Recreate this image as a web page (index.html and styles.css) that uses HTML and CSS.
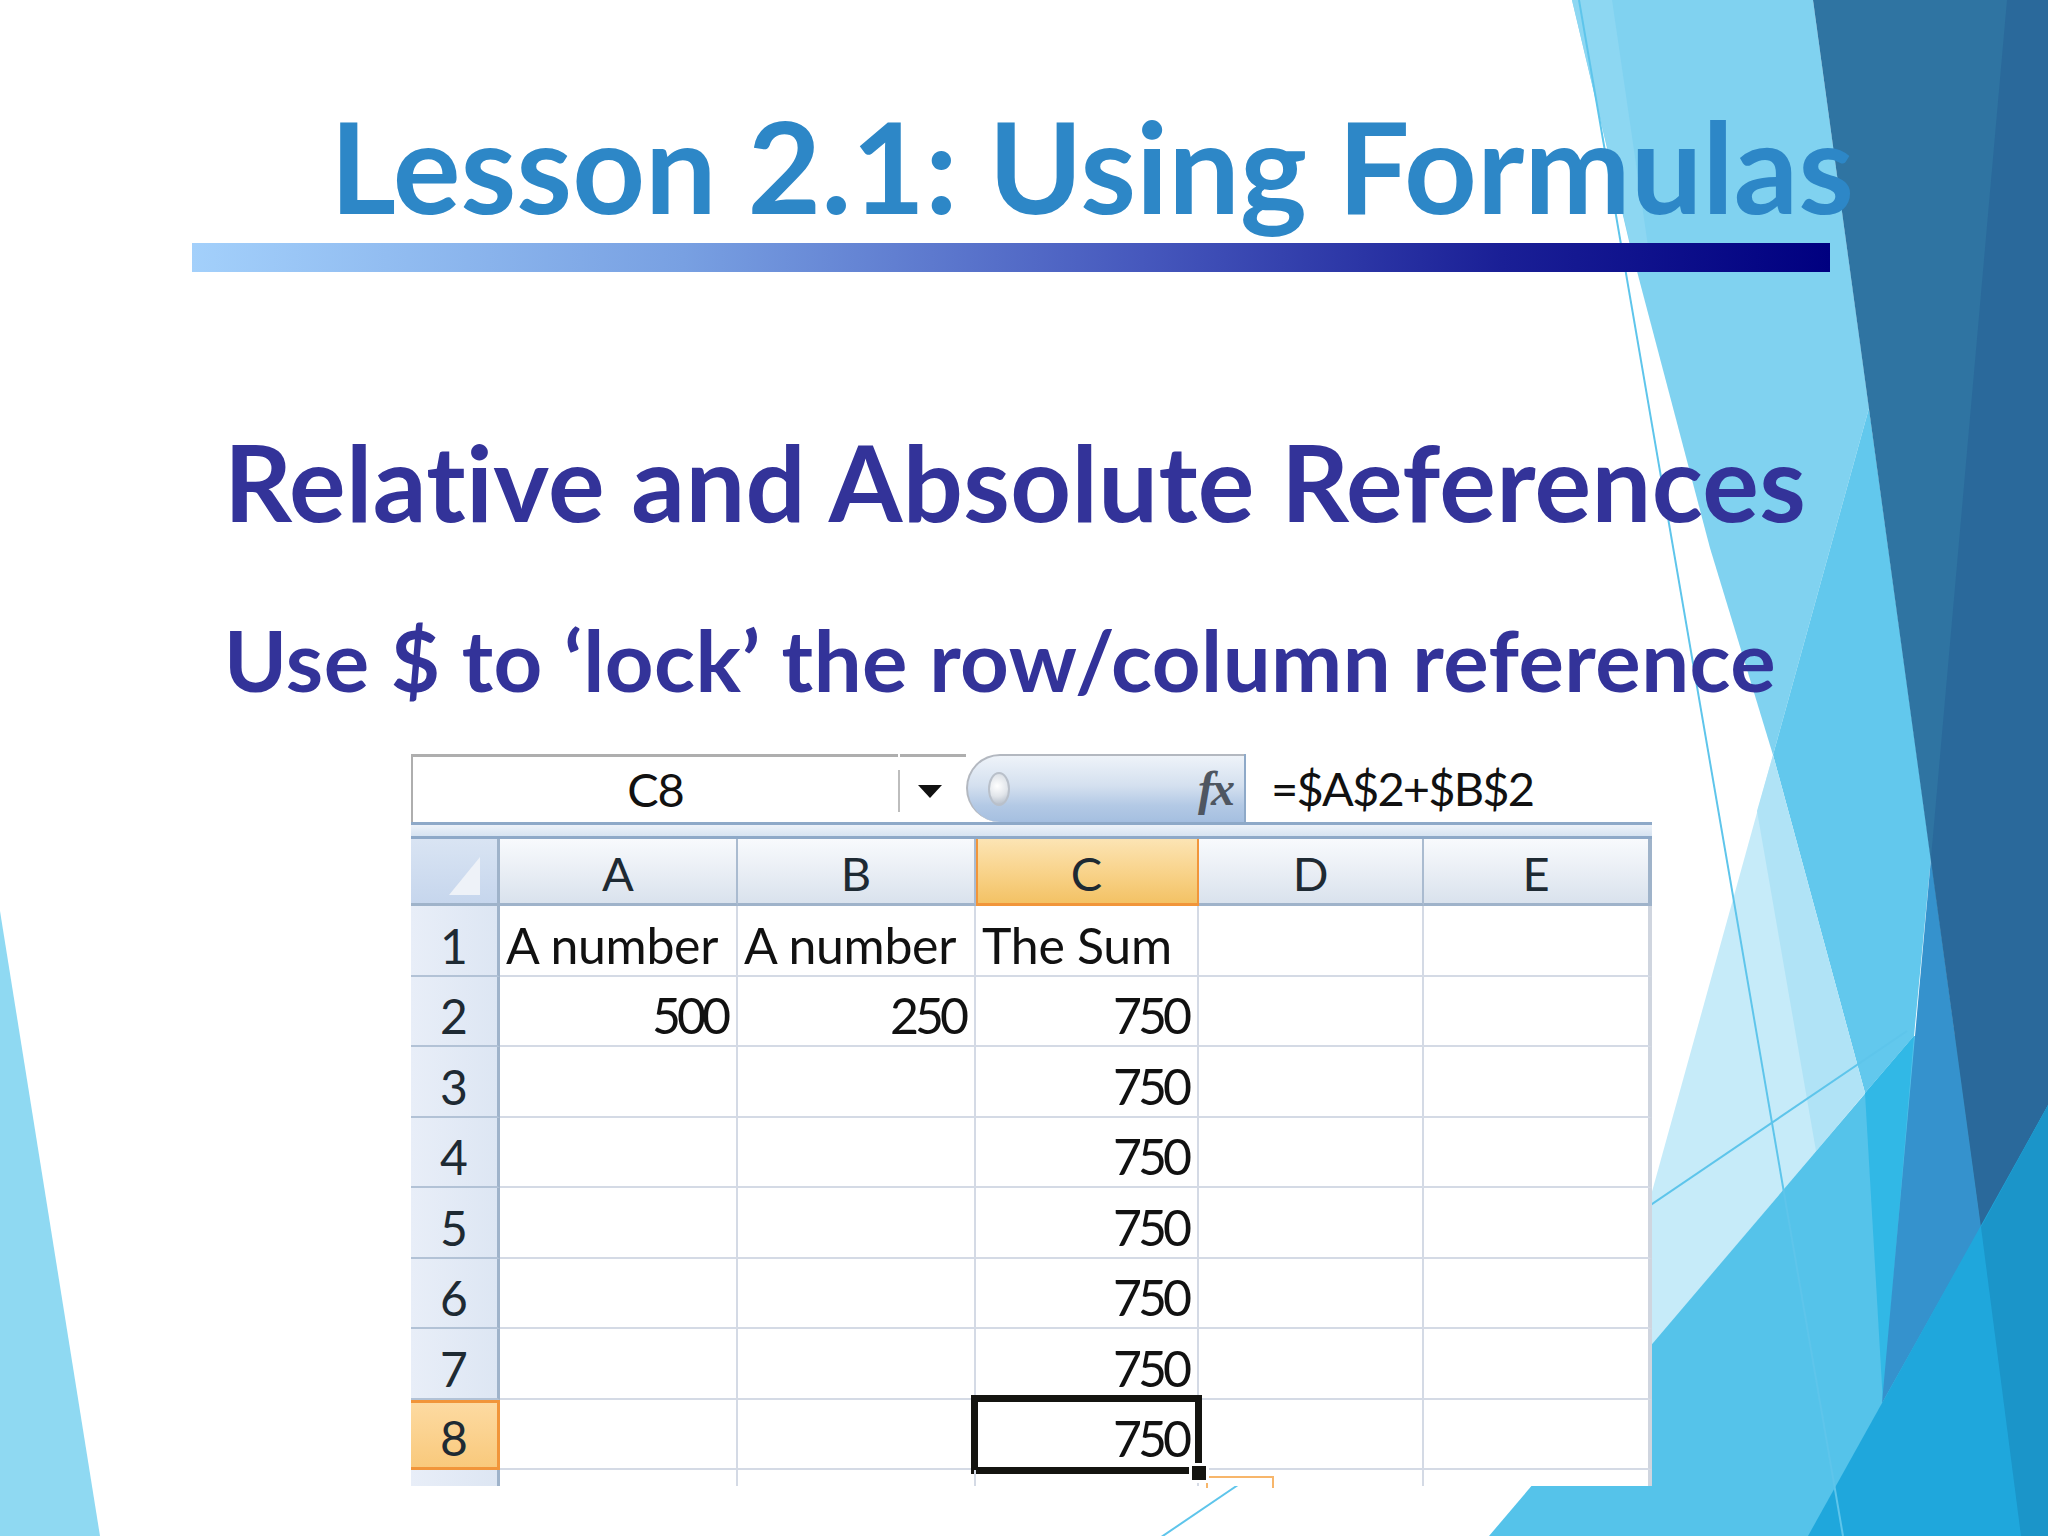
FILE: index.html
```html
<!DOCTYPE html>
<html>
<head>
<meta charset="utf-8">
<title>Lesson 2.1: Using Formulas</title>
<link rel="stylesheet" href="styles.css">
</head>
<body>
<div class="slide">
  <svg class="bg" viewBox="0 0 2048 1536" width="2048" height="1536" aria-hidden="true">
    <polygon points="0,911 100,1536 0,1536" fill="#8fd9f2"/>
    <polygon points="1572,0 1813,0 1869,408 1773,755 1710,548 1629,241" fill="#80d2f0"/>
    <polygon points="1572,0 1612,0 1650,260 1633,255" fill="#8dd7f2"/>
    <polygon points="1869,408 1931,858 1914,1036 1865,1093 1773,755" fill="#62c8ed"/>
    <polygon points="1773,755 1865,1093 1640,1360 1640,1235" fill="#c6ebf9"/>
    <polygon points="1757,811 1773,755 1865,1093 1816,1151" fill="#b0e3f6"/>
    <polygon points="1489,1536 1914,1036 2048,1036 2048,1536" fill="#55c3ea"/>
    <polygon points="1865,1093 1914,1036 1883,1403" fill="#31b8e6"/>
    <polygon points="1931,858 1981,1227 1882,1403" fill="#3592cd"/>
    <polygon points="1813,0 2048,0 2048,1105 1981,1227" fill="#2f74a2"/>
    <polygon points="2007,0 2048,0 2048,1105 1981,1227 1931,858" fill="#2a699b"/>
    <polygon points="2048,1105 1808,1536 2048,1536" fill="#1fa7dc"/>
    <polygon points="1981,1227 2048,1105 2048,1536 2021,1536" fill="#1b95c9"/>
    <line x1="1579" y1="0" x2="1843" y2="1536" stroke="#5ec5eb" stroke-width="2"/>
    <line x1="1148" y1="1546" x2="1907" y2="1031" stroke="#5ec5eb" stroke-width="2"/>
  </svg>

  <div class="content">
    <h1 class="title">Lesson 2.1: Using Formulas</h1>
    <div class="rule"></div>
    <h2 class="sub1">Relative and Absolute References</h2>
    <h3 class="sub2">Use $ to ‘lock’ the row/column reference</h3>

    <div class="sheet">
      <div class="fbar">
        <div class="namebox">C8</div>
        <div class="ddiv"></div>
        <div class="arrow"><span class="tri"></span></div>
        <div class="fxbtn"><span class="knob"></span><span class="fx">fx</span></div>
        <div class="fsep"></div>
        <div class="formula">=$A$2+$B$2</div>
      </div>
      <div class="fstrip"></div>
      <div class="grid">
        <div class="h corner"><svg width="86" height="64" viewBox="0 0 86 64"><polygon points="69,18 69,56 38,56" fill="#eef2f8"/></svg></div>
        <div class="h col">A</div>
        <div class="h col">B</div>
        <div class="h col sel">C</div>
        <div class="h col">D</div>
        <div class="h col last">E</div>

        <div class="rh">1</div><div class="c">A number</div><div class="c">A number</div><div class="c">The Sum</div><div class="c"></div><div class="c last"></div>
        <div class="rh">2</div><div class="c n">500</div><div class="c n">250</div><div class="c n">750</div><div class="c"></div><div class="c last"></div>
        <div class="rh">3</div><div class="c"></div><div class="c"></div><div class="c n">750</div><div class="c"></div><div class="c last"></div>
        <div class="rh">4</div><div class="c"></div><div class="c"></div><div class="c n">750</div><div class="c"></div><div class="c last"></div>
        <div class="rh">5</div><div class="c"></div><div class="c"></div><div class="c n">750</div><div class="c"></div><div class="c last"></div>
        <div class="rh">6</div><div class="c"></div><div class="c"></div><div class="c n">750</div><div class="c"></div><div class="c last"></div>
        <div class="rh">7</div><div class="c"></div><div class="c"></div><div class="c n">750</div><div class="c"></div><div class="c last"></div>
        <div class="rh sel">8</div><div class="c"></div><div class="c"></div><div class="c n active">750<span class="handle"></span></div><div class="c"></div><div class="c last"></div>
        <div class="rh part"></div><div class="c part"></div><div class="c part"></div><div class="c part"><span class="autofill"></span></div><div class="c part"></div><div class="c part last"></div>
      </div>
    </div>
  </div>
</div>
</body>
</html>
```
FILE: styles.css
```css
html, body {
  margin: 0;
  padding: 0;
  background: #fff;
}

.slide {
  position: relative;
  width: 2048px;
  height: 1536px;
  overflow: hidden;
  background: #fff;
  font-family: Lato, "Open Sans", "DejaVu Sans", sans-serif;
}

.bg {
  position: absolute;
  left: 0;
  top: 0;
}

.content {
  position: relative;
  display: flex;
  flex-direction: column;
  align-items: flex-start;
}

.title {
  margin: 102px 0 0 330px;
  font-size: 127px;
  line-height: 1;
  font-weight: 700;
  color: #2d87c7;
  letter-spacing: 0;
  white-space: nowrap;
}

.rule {
  margin: 14px 0 0 192px;
  width: 1638px;
  height: 29px;
  background: linear-gradient(to right, #a3d0fb 0%, #78a0e2 30%, #4658bd 58%, #1a1f96 80%, #000080 100%);
}

.sub1 {
  margin: 156px 0 0 224px;
  font-size: 106px;
  line-height: 1;
  font-weight: 700;
  color: #333399;
  letter-spacing: 0.4px;
  white-space: nowrap;
}

.sub2 {
  margin: 83px 0 0 224px;
  font-size: 85px;
  line-height: 1;
  font-weight: 700;
  color: #333399;
  letter-spacing: 0.5px;
  white-space: nowrap;
}

/* ---------- spreadsheet ---------- */
.sheet {
  position: relative;
  margin: 52px 0 0 411px;
  width: 1241px;
  background: #fff;
  color: #111;
}

.fbar {
  display: flex;
  height: 71px;
  box-sizing: border-box;
  border-bottom: 3px solid #8ea9c8;
}

.namebox {
  width: 487px;
  box-sizing: border-box;
  border-top: 3px solid #aeaeae;
  border-left: 2px solid #aeaeae;
  display: flex;
  align-items: center;
  justify-content: center;
  font-size: 47px;
  line-height: 1;
  letter-spacing: -1px;
}

.ddiv {
  width: 2px;
  background: #bdbdbd;
  margin: 16px 0 10px;
}

.arrow {
  width: 66px;
  box-sizing: border-box;
  border-top: 3px solid #aeaeae;
  display: flex;
  align-items: center;
  justify-content: center;
}

.tri {
  width: 0;
  height: 0;
  border-left: 12px solid transparent;
  border-right: 12px solid transparent;
  border-top: 13px solid #111;
  margin-left: -6px;
  margin-top: 4px;
}

.fxbtn {
  width: 278px;
  box-sizing: border-box;
  border: 2px solid #b3b8c0;
  border-right: none;
  border-bottom: none;
  border-radius: 40px 0 0 40px;
  background: linear-gradient(#eef3f9 0%, #d4e0ef 45%, #b3c9e5 75%, #a5bfe0 100%);
  display: flex;
  align-items: center;
  justify-content: space-between;
  padding: 0 12px 0 20px;
}

.knob {
  width: 22px;
  height: 34px;
  border-radius: 50%;
  border: 2px solid #b9c0ca;
  box-sizing: border-box;
  background: radial-gradient(circle at 40% 40%, #ffffff 0%, #e1e5ea 50%, #aab4c2 100%);
}

.fx {
  font-family: "Liberation Serif", "DejaVu Serif", serif;
  font-style: italic;
  font-weight: 700;
  font-size: 48px;
  color: #4e5661;
  letter-spacing: -3px;
  line-height: 1;
}

.fsep {
  width: 2px;
  background: #8ea9c8;
}

.formula {
  flex: 1;
  display: flex;
  align-items: center;
  padding-left: 25px;
  font-size: 47px;
  line-height: 1;
  letter-spacing: -1.8px;
  color: #111;
}

.fstrip {
  height: 14px;
  box-sizing: border-box;
  border-bottom: 3px solid #8ea9c8;
  background: linear-gradient(#edf2f9, #d6e3f1);
}

.grid {
  display: grid;
  grid-template-columns: 89px 238px 238px 223px 225px 228px;
  grid-template-rows: 67px repeat(8, 70.5px) 16px;
}

.h {
  box-sizing: border-box;
  border-right: 2px solid #aabbd0;
  border-bottom: 3px solid #9fb3ca;
  background: linear-gradient(#f8fafd 0%, #e8edf4 55%, #d9e2ed 100%);
  display: flex;
  align-items: flex-end;
  justify-content: center;
  padding-bottom: 6px;
  font-size: 47px;
  line-height: 1;
  color: #1e2a33;
}

.h.corner {
  padding: 0;
  border-right: 3px solid #9fb3ca;
  background: linear-gradient(#d9e4f3, #c6d6ed);
  align-items: stretch;
  justify-content: flex-start;
}

.h.sel {
  background: linear-gradient(#fce4b4 0%, #f8d288 55%, #f3c265 100%);
  border-right: 2px solid #f1953a;
  border-bottom: 3px solid #f1953a;
  box-shadow: inset 2px 0 0 #f1953a;
}

.h.last {
  border-right: 4px solid #9fb3ca;
}

.rh {
  box-sizing: border-box;
  border-right: 3px solid #9fb3ca;
  border-bottom: 2px solid #b2c2d6;
  background: linear-gradient(to right, #e8eef8, #dde6f3);
  display: flex;
  align-items: flex-end;
  justify-content: center;
  padding-bottom: 5px;
  font-size: 48px;
  line-height: 1;
  color: #1e2a33;
}

.rh.sel {
  background: linear-gradient(#fddba3, #f9c97c);
  border-right: 3px solid #f1953a;
  border-bottom: 3px solid #f1953a;
  box-shadow: inset 0 3px 0 #f1953a;
}

.c {
  box-sizing: border-box;
  border-right: 2px solid #d4dae5;
  border-bottom: 2px solid #d4dae5;
  display: flex;
  align-items: flex-end;
  padding: 0 6px 5px;
  font-size: 50px;
  line-height: 1;
  letter-spacing: -0.3px;
  white-space: nowrap;
  overflow: visible;
  color: #111;
}

.c.n {
  justify-content: flex-end;
  padding-right: 9px;
  letter-spacing: -4px;
}

.c.last {
  border-right: 4px solid #cfd5df;
}

.c.part,
.rh.part {
  border-bottom: none;
}

.c.active {
  position: relative;
}

.c.active::after {
  content: "";
  position: absolute;
  left: -5px;
  top: -5px;
  right: -5px;
  bottom: -6px;
  border: 7px solid #141410;
}

.handle {
  position: absolute;
  right: -9px;
  bottom: -12px;
  width: 14px;
  height: 14px;
  background: #141410;
  box-shadow: 0 0 0 3px #fff;
  z-index: 2;
}

.c.part {
  position: relative;
}

.autofill {
  position: absolute;
  left: 230px;
  top: 6px;
  width: 68px;
  height: 12px;
  box-sizing: border-box;
  border: 2px solid #f7b66b;
  border-bottom: none;
}
```
